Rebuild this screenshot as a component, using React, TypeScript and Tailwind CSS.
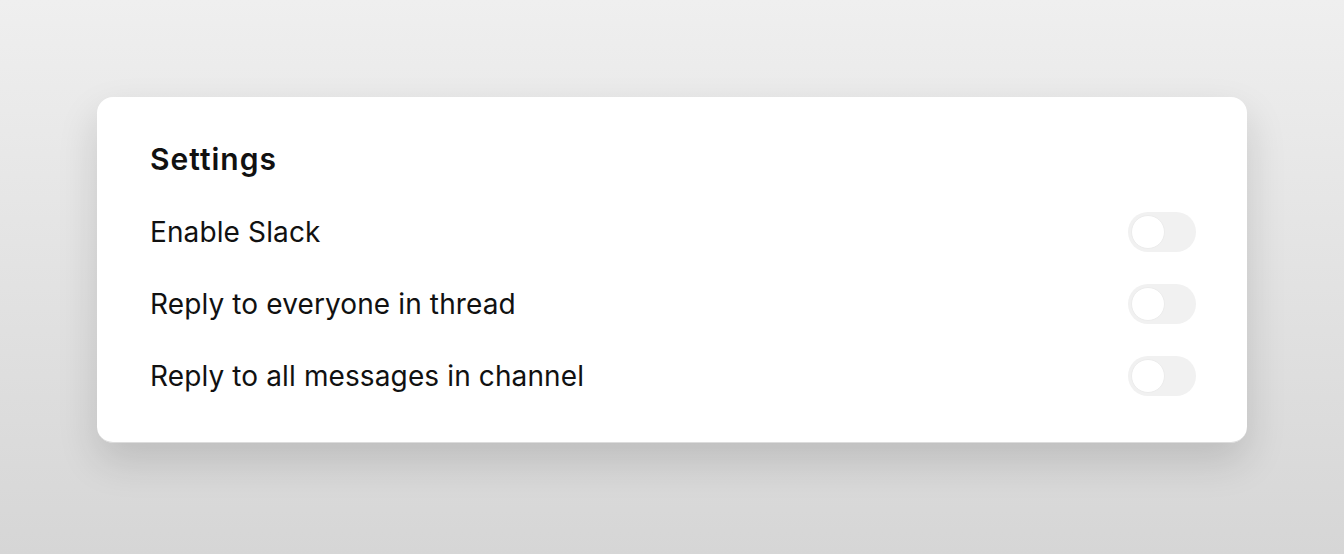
import { useState } from "react";

const rows = [
  "Enable Slack",
  "Reply to everyone in thread",
  "Reply to all messages in channel",
];

const Toggle = ({ on, onClick }: { on: boolean; onClick: () => void }) => (
  <button
    onClick={onClick}
    className={`relative w-[68px] h-[40px] rounded-full transition-colors ${
      on ? "bg-[#111]" : "bg-[#f1f1f1]"
    }`}
  >
    <span
      className={`absolute top-[3px] left-[3px] w-[34px] h-[34px] rounded-full bg-white border border-[#ececec] transition-transform ${
        on ? "translate-x-[28px]" : ""
      }`}
    />
  </button>
);

export default function App() {
  const [state, setState] = useState([false, false, false]);

  return (
    <div
      className="w-full h-[554px] bg-gradient-to-b from-[#efefef] to-[#d6d6d6] pt-[97px] pl-[97px]"
      style={{ fontFamily: "Inter, 'Noto Sans', sans-serif" }}
    >
      <div className="w-[1150px] h-[346px] bg-white rounded-[16px] border-b border-[#dcdcdc] shadow-[0_18px_40px_rgba(0,0,0,0.14)] pt-[43px] pl-[53px] pr-[51px]">
        <h1 className="text-[30px] leading-[38px] font-semibold text-[#111] tracking-[1px] mb-[18px]">
          Settings
        </h1>
        <div className="flex flex-col">
          {rows.map((label, i) => (
            <div key={label} className="h-[72px] flex items-center justify-between">
              <span className="text-[28px] text-[#111] tracking-[0.12px]">{label}</span>
              <Toggle
                on={state[i]}
                onClick={() => setState((s) => s.map((v, j) => (j === i ? !v : v)))}
              />
            </div>
          ))}
        </div>
      </div>
    </div>
  );
}
